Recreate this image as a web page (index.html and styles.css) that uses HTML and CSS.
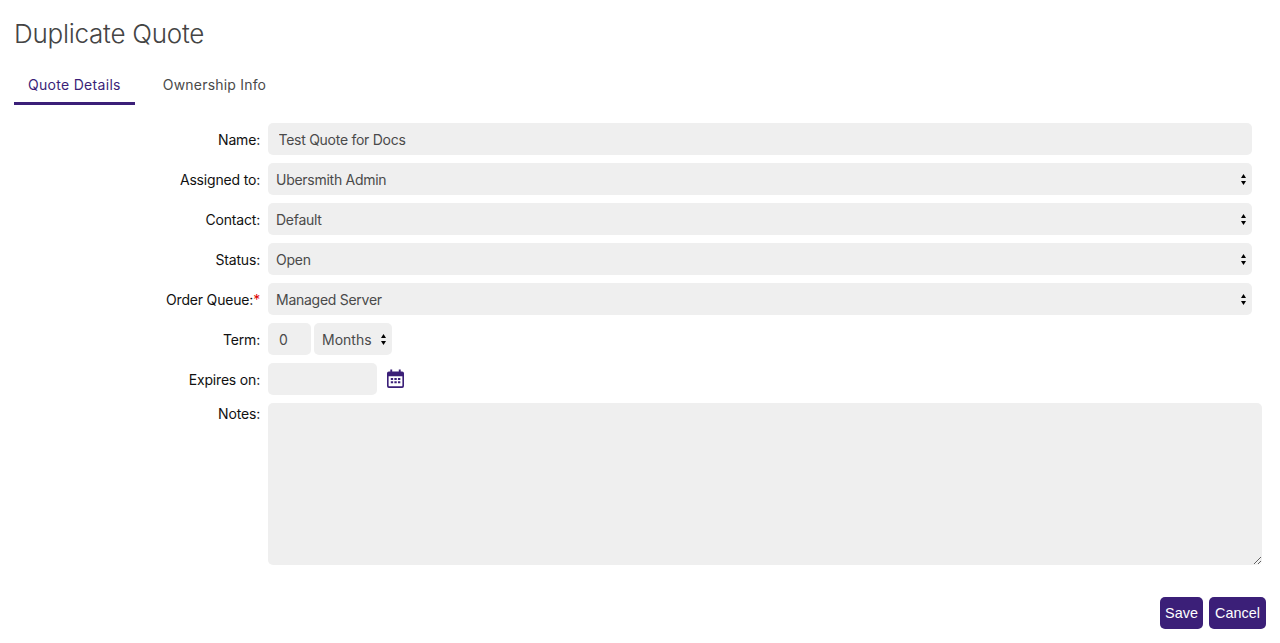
FILE: index.html
```html
<!DOCTYPE html>
<html lang="en">

<head>
    <meta charset="UTF-8" />
    <title>Duplicate Quote</title>
    <link rel="stylesheet" href="styles.css">
</head>

<body>
    <h1 class="page-title">Duplicate Quote</h1>

    <nav class="tabs">
        <a class="tab active" href="#">Quote Details</a>
        <a class="tab" href="#">Ownership Info</a>
    </nav>

    <form class="quote-form">
        <label class="field-label">Name:</label>
        <div class="field"><input class="control text-input" type="text" value="Test Quote for Docs"></div>

        <label class="field-label">Assigned to:</label>
        <div class="field select-wrap">
            <select class="control"><option>Ubersmith Admin</option></select>
            <svg class="arrows" width="5" height="11" viewBox="0 0 5 11"><path d="M2.500 0 5 4H0zM2.500 11 0 7h5z" /></svg>
        </div>

        <label class="field-label">Contact:</label>
        <div class="field select-wrap">
            <select class="control"><option>Default</option></select>
            <svg class="arrows" width="5" height="11" viewBox="0 0 5 11"><path d="M2.500 0 5 4H0zM2.500 11 0 7h5z" /></svg>
        </div>

        <label class="field-label">Status:</label>
        <div class="field select-wrap">
            <select class="control"><option>Open</option></select>
            <svg class="arrows" width="5" height="11" viewBox="0 0 5 11"><path d="M2.500 0 5 4H0zM2.500 11 0 7h5z" /></svg>
        </div>

        <label class="field-label">Order Queue:<span class="required">*</span></label>
        <div class="field select-wrap">
            <select class="control"><option>Managed Server</option></select>
            <svg class="arrows" width="5" height="11" viewBox="0 0 5 11"><path d="M2.500 0 5 4H0zM2.500 11 0 7h5z" /></svg>
        </div>

        <label class="field-label">Term:</label>
        <div class="field term-row">
            <input class="control term-input" type="text" value="0">
            <div class="select-wrap term-unit">
                <select class="control"><option>Months</option></select>
                <svg class="arrows" width="5" height="11" viewBox="0 0 5 11"><path d="M2.500 0 5 4H0zM2.500 11 0 7h5z" /></svg>
            </div>
        </div>

        <label class="field-label">Expires on:</label>
        <div class="field date-row">
            <input class="control date-input" type="text">
            <svg class="calendar" width="17" height="19" viewBox="0 0 18 20">
                <path fill-rule="evenodd" d="M3.500 0.500h2v2h7v-2h2v2H16a2 2 0 0 1 2 2V18a2 2 0 0 1-2 2H2a2 2 0 0 1-2-2V4.500a2 2 0 0 1 2-2h1.500zM1.700 7.500V17.300c0 .6.400 1 1 1H15.300c.6 0 1-.4 1-1V7.500z" />
                <path d="M4 9.500h2.500v2H4zM7.800 9.500h2.500v2H7.800zM11.600 9.500h2.500v2h-2.500zM4 13h2.500v2H4zM7.800 13h2.500v2H7.800zM11.600 13h2.500v2h-2.500z" />
            </svg>
        </div>

        <label class="field-label notes-label">Notes:</label>
        <div class="notes-field"><textarea class="notes"></textarea></div>
    </form>

    <div class="actions">
        <button class="btn btn-save" type="button">Save</button>
        <button class="btn btn-cancel" type="button">Cancel</button>
    </div>
</body>

</html>
```

FILE: styles.css
```css
/* Global Styles */
body {
    margin: 0;
    padding: 0 14px;
    font-family: Inter, 'Noto Sans', sans-serif;
    font-size: 14px;
    background: #fff;
    color: #000;
}

.page-title {
    margin: 0;
    padding-top: 17px;
    font-size: 26px;
    line-height: 34px;
    font-weight: 300;
    letter-spacing: -0.25px;
    color: #444;
}

/* Tabs */
.tabs {
    display: flex;
    margin-top: 14px;
}

.tab {
    padding: 0 14px;
    height: 40px;
    line-height: 40px;
    box-sizing: border-box;
    letter-spacing: 0.3px;
    color: #4a4a4a;
    text-decoration: none;
}

.tab + .tab {
    margin-left: 14px;
    letter-spacing: 0.2px;
}

.tab.active {
    color: #3b1f78;
    border-bottom: 3px solid #3b1f78;
}

/* Form */
.quote-form {
    display: grid;
    grid-template-columns: 246px 1fr;
    column-gap: 8px;
    row-gap: 8px;
    margin-top: 18px;
}

.field-label {
    height: 32px;
    line-height: 34px;
    text-align: right;
    letter-spacing: -0.18px;
    color: #111;
}

.required {
    color: #e00000;
}

.field {
    height: 32px;
    margin-right: -2px;
    width: 984px;
}

.control {
    display: block;
    width: 100%;
    height: 32px;
    box-sizing: border-box;
    border: none;
    border-radius: 5px;
    padding: 0 8px;
    background: #efefef;
    font-family: inherit;
    font-size: 14px;
    letter-spacing: -0.27px;
    color: #4a4a4a;
    appearance: none;
    outline: none;
}

.text-input {
    padding: 0 10.500px;
}

.select-wrap {
    position: relative;
}

.arrows {
    position: absolute;
    right: 6px;
    top: 11px;
    fill: #000;
}

.term-row {
    display: flex;
    gap: 3px;
}

.term-input {
    width: 43px;
    padding: 0 11px;
}

.term-unit {
    width: 78px;
}

.term-unit .control {
    letter-spacing: 0;
}

.date-row {
    display: flex;
    align-items: center;
    gap: 10px;
}

.date-input {
    width: 109px;
}

.calendar {
    fill: #3b1f78;
    margin-top: -2px;
}

.notes-label {
    height: 22px;
    line-height: 22px;
}

.notes {
    display: block;
    width: 994px;
    height: 162px;
    box-sizing: border-box;
    border: none;
    border-radius: 5px;
    background: #efefef;
    outline: none;
}

/* Buttons */
.actions {
    display: flex;
    justify-content: flex-end;
    gap: 6px;
    margin-top: 32px;
}

.btn {
    height: 32px;
    padding: 0;
    border: none;
    border-radius: 5px;
    background: #3b1f78;
    color: #fff;
    font-family: 'Liberation Sans', sans-serif;
    font-size: 14.4px;
}

.btn-save {
    width: 43px;
}

.btn-cancel {
    width: 57px;
}
```
